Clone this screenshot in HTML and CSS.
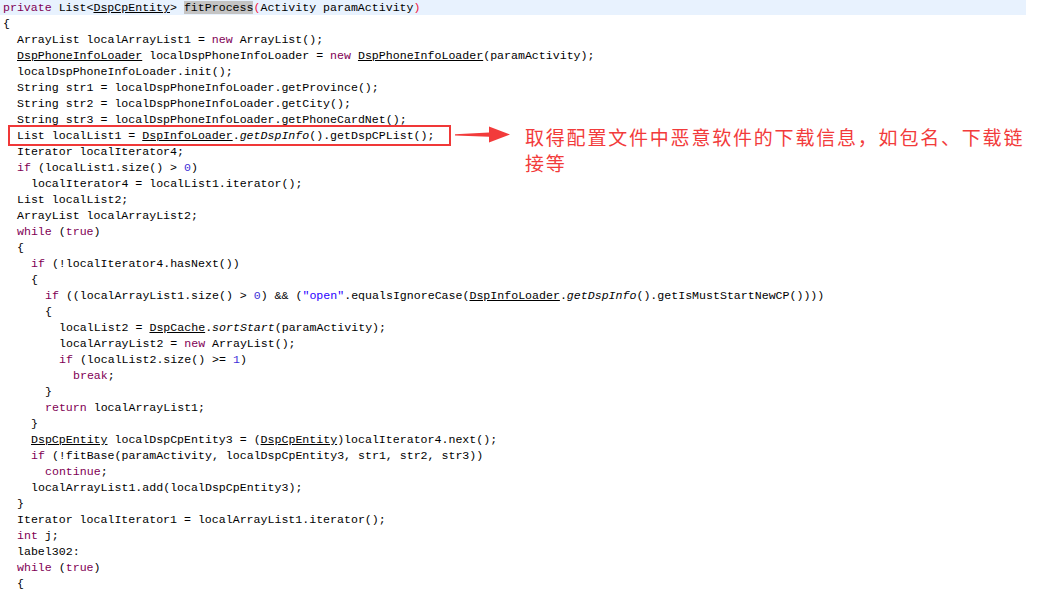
FILE: index.html
```html
<!DOCTYPE html>
<html>
<head>
<meta charset="utf-8">
<link rel="stylesheet" href="styles.css">
</head>
<body>
<div class="page">
  <div class="code">
    <div class="ln l0 hl"><span class="k">private</span> List&lt;<span class="u">DspCpEntity</span>&gt; <span class="sel">fitProcess</span><span class="br">(</span>Activity paramActivity<span class="br">)</span></div>
    <div class="ln l0">{</div>
    <div class="ln l1">ArrayList localArrayList1 = <span class="k">new</span> ArrayList();</div>
    <div class="ln l1"><span class="u">DspPhoneInfoLoader</span> localDspPhoneInfoLoader = <span class="k">new</span> <span class="u">DspPhoneInfoLoader</span>(paramActivity);</div>
    <div class="ln l1">localDspPhoneInfoLoader.init();</div>
    <div class="ln l1">String str1 = localDspPhoneInfoLoader.getProvince();</div>
    <div class="ln l1">String str2 = localDspPhoneInfoLoader.getCity();</div>
    <div class="ln l1">String str3 = localDspPhoneInfoLoader.getPhoneCardNet();</div>
    <div class="ln l1">List localList1 = <span class="u">DspInfoLoader</span>.<span class="i">getDspInfo</span>().getDspCPList();</div>
    <div class="ln l1">Iterator localIterator4;</div>
    <div class="ln l1"><span class="k">if</span> (localList1.size() &gt; <span class="n">0</span>)</div>
    <div class="ln l2">localIterator4 = localList1.iterator();</div>
    <div class="ln l1">List localList2;</div>
    <div class="ln l1">ArrayList localArrayList2;</div>
    <div class="ln l1"><span class="k">while</span> (<span class="k">true</span>)</div>
    <div class="ln l1">{</div>
    <div class="ln l2"><span class="k">if</span> (!localIterator4.hasNext())</div>
    <div class="ln l2">{</div>
    <div class="ln l3"><span class="k">if</span> ((localArrayList1.size() &gt; <span class="n">0</span>) &amp;&amp; (<span class="s">"open"</span>.equalsIgnoreCase(<span class="u">DspInfoLoader</span>.<span class="i">getDspInfo</span>().getIsMustStartNewCP())))</div>
    <div class="ln l3">{</div>
    <div class="ln l4">localList2 = <span class="u">DspCache</span>.<span class="i">sortStart</span>(paramActivity);</div>
    <div class="ln l4">localArrayList2 = <span class="k">new</span> ArrayList();</div>
    <div class="ln l4"><span class="k">if</span> (localList2.size() &gt;= <span class="n">1</span>)</div>
    <div class="ln l5"><span class="k">break</span>;</div>
    <div class="ln l3">}</div>
    <div class="ln l3"><span class="k">return</span> localArrayList1;</div>
    <div class="ln l2">}</div>
    <div class="ln l2"><span class="u">DspCpEntity</span> localDspCpEntity3 = (<span class="u">DspCpEntity</span>)localIterator4.next();</div>
    <div class="ln l2"><span class="k">if</span> (!fitBase(paramActivity, localDspCpEntity3, str1, str2, str3))</div>
    <div class="ln l3"><span class="k">continue</span>;</div>
    <div class="ln l2">localArrayList1.add(localDspCpEntity3);</div>
    <div class="ln l1">}</div>
    <div class="ln l1">Iterator localIterator1 = localArrayList1.iterator();</div>
    <div class="ln l1"><span class="k">int</span> j;</div>
    <div class="ln l1">label302:</div>
    <div class="ln l1"><span class="k">while</span> (<span class="k">true</span>)</div>
    <div class="ln l1">{</div>
  </div>
  <div class="box"></div>
  <svg class="arrow" width="62" height="22" viewBox="0 0 62 22">
    <polygon points="3,10.2 37,8.5 37,2.5 58,10.5 37,18.5 37,12.8 3,11.6" fill="#f23b3b"/>
  </svg>
  <div class="note">取得配置文件中恶意软件的下载信息，如包名、下载链接等</div>
</div>
</body>
</html>
```
FILE: styles.css
```css
html, body {
  margin: 0;
  padding: 0;
  background: #ffffff;
}
.page {
  position: relative;
  width: 1039px;
  height: 594px;
  overflow: hidden;
}
.code {
  font-family: "Liberation Mono", "Courier New", monospace;
  font-size: 11.6px;
  line-height: 16px;
  color: #000000;
}
.ln {
  height: 16px;
  white-space: pre;
}
.hl {
  background: #e8f2fe;
  width: 1023px;
  height: 15px;
  line-height: 15px;
  margin-bottom: 1px;
}
.l0 { padding-left: 3px; }
.l1 { padding-left: 17px; }
.l2 { padding-left: 31px; }
.l3 { padding-left: 45px; }
.l4 { padding-left: 59px; }
.l5 { padding-left: 73px; }
.k { color: #7f0055; }
.u { text-decoration: underline; }
.i { font-style: italic; }
.n { color: #3e30d8; }
.s { color: #2a00ff; }
.sel { background: #c4c4c4; }
.br { color: #f0143c; }
.box {
  position: absolute;
  left: 8px;
  top: 125px;
  width: 439px;
  height: 17px;
  border: 2px solid #f03838;
}
.arrow {
  position: absolute;
  left: 452px;
  top: 124px;
}
.note {
  position: absolute;
  left: 525px;
  top: 124px;
  width: 510px;
  font-family: "Noto Sans CJK SC", sans-serif;
  font-size: 19px;
  line-height: 26px;
  letter-spacing: 1.8px;
  color: #f23b3b;
}
```
